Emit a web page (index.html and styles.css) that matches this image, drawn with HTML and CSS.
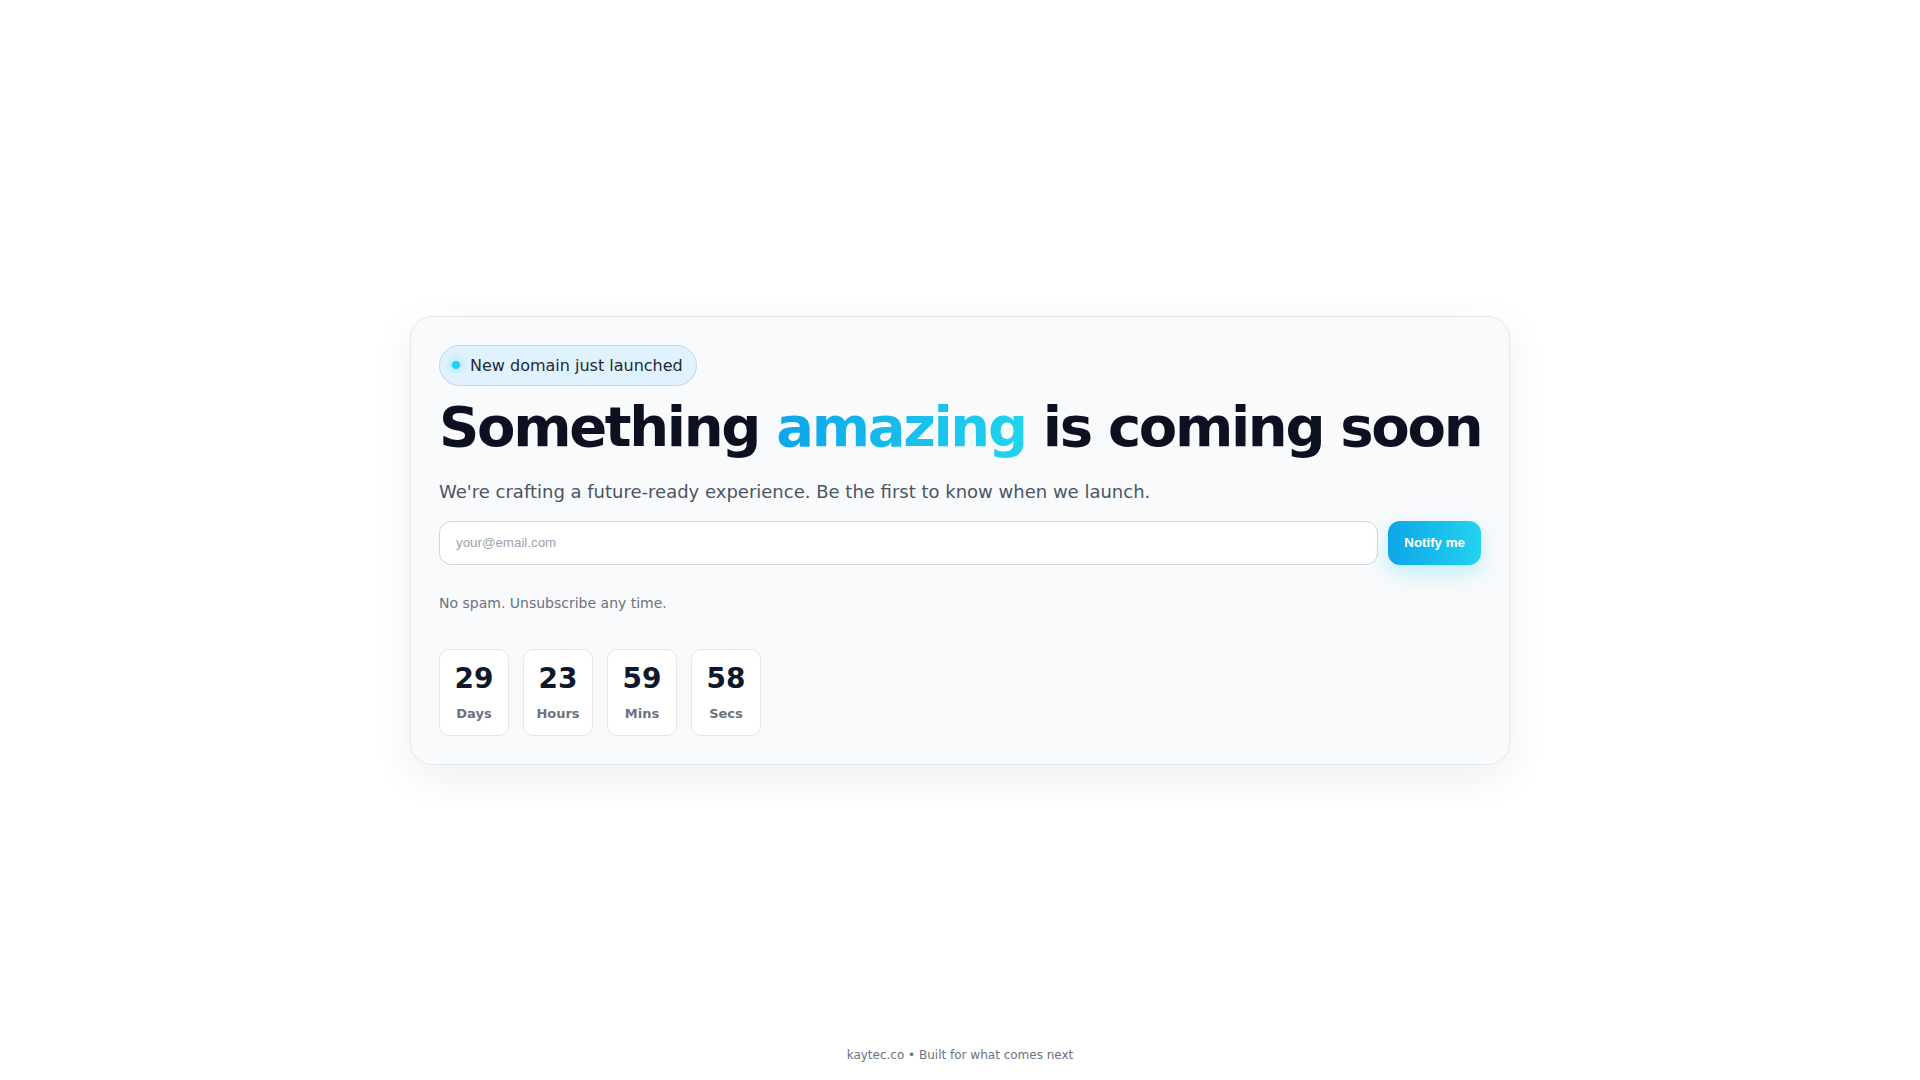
FILE: index.html
```html
<!DOCTYPE html>
<html lang="en">
<head>
<meta charset="utf-8">
<title>kaytec.co — Coming soon</title>
<link rel="stylesheet" href="styles.css">
</head>
<body>
  <div class="spacer"></div>
  <main class="card">
    <div class="badge"><span class="dot"></span><span>New domain just launched</span></div>
    <h1 class="title">Something <span class="accent">amazing</span> is coming soon</h1>
    <p class="lead">We're crafting a future-ready experience. Be the first to know when we launch.</p>
    <form class="signup" onsubmit="return false;">
      <input class="email" type="email" placeholder="your@email.com">
      <button class="notify" type="submit">Notify me</button>
    </form>
    <p class="note">No spam. Unsubscribe any time.</p>
    <div class="countdown">
      <div class="unit"><div class="num">29</div><div class="label">Days</div></div>
      <div class="unit"><div class="num">23</div><div class="label">Hours</div></div>
      <div class="unit"><div class="num">59</div><div class="label">Mins</div></div>
      <div class="unit"><div class="num">58</div><div class="label">Secs</div></div>
    </div>
  </main>
  <footer class="footer">kaytec.co • Built for what comes next</footer>
</body>
</html>
```

FILE: styles.css
```css
* { box-sizing: border-box; }

html, body { margin: 0; padding: 0; }

body {
  min-height: 100vh;
  display: grid;
  grid-template-rows: 1fr auto 1fr;
  justify-items: center;
  background: #ffffff;
  font-family: "DejaVu Sans", "Noto Sans", sans-serif;
  color: #0f172a;
}

.card {
  width: 1100px;
  display: flex;
  flex-direction: column;
  align-items: flex-start;
  padding: 28px;
  background: #f8fafc;
  border: 1px solid #e2e8f0;
  border-radius: 22px;
  box-shadow: 0 12px 40px rgba(15, 23, 42, 0.07);
}

.badge {
  display: inline-flex;
  align-items: center;
  gap: 10px;
  padding: 8px 13px 8px 12px;
  line-height: 23px;
  font-size: 16px;
  color: #1e293b;
  background: #e0f2fe;
  border: 1px solid #c8d5e2;
  border-radius: 999px;
}

.dot {
  width: 8px;
  height: 8px;
  border-radius: 50%;
  background: #22d3ee;
  box-shadow: 0 0 8px rgba(34, 211, 238, 0.7);
}

.title {
  margin: 10px 0 0;
  font-size: 56px;
  line-height: 62px;
  font-weight: 700;
  letter-spacing: -2.32px;
  color: #0b1120;
  white-space: nowrap;
}

.accent {
  background: linear-gradient(90deg, #0ea5e9, #22d3ee);
  -webkit-background-clip: text;
  background-clip: text;
  color: transparent;
}

.lead {
  margin: 20px 0 0;
  font-size: 18px;
  line-height: 27px;
  color: #4b5563;
}

.signup {
  margin: 16px 0 0;
  width: 100%;
  display: flex;
  gap: 10px;
}

.email {
  flex: 1;
  height: 44px;
  padding: 0 16px;
  font-family: "Liberation Sans", Arial, sans-serif;
  font-size: 13.333px;
  color: #111827;
  background: #ffffff;
  border: 1px solid #d1d5db;
  border-radius: 12px;
  outline: none;
}

.email::placeholder { color: #9ca3af; }

.notify {
  height: 44px;
  padding: 0 16px;
  font-family: "Liberation Sans", Arial, sans-serif;
  font-size: 13.333px;
  font-weight: 700;
  color: #ffffff;
  background: linear-gradient(90deg, #0ea5e9, #22d3ee);
  border: none;
  border-radius: 12px;
  box-shadow: 0 8px 20px rgba(34, 211, 238, 0.28);
  cursor: pointer;
}

.note {
  margin: 28px 0 0;
  font-size: 14px;
  line-height: 20px;
  color: #6b7280;
}

.countdown {
  margin-top: 36px;
  display: flex;
  gap: 14px;
}

.unit {
  width: 70px;
  padding: 12px 0 13px;
  text-align: center;
  background: #ffffff;
  border: 1px solid #e5e7eb;
  border-radius: 10px;
}

.num {
  font-size: 28px;
  line-height: 34px;
  font-weight: 700;
  color: #0f172a;
}

.label {
  margin-top: 10px;
  font-size: 13px;
  line-height: 16px;
  font-weight: 700;
  color: #6b7280;
}

.footer {
  align-self: end;
  padding-bottom: 16px;
  font-size: 12px;
  line-height: 18px;
  color: #6b7280;
}

.spacer { }
```
